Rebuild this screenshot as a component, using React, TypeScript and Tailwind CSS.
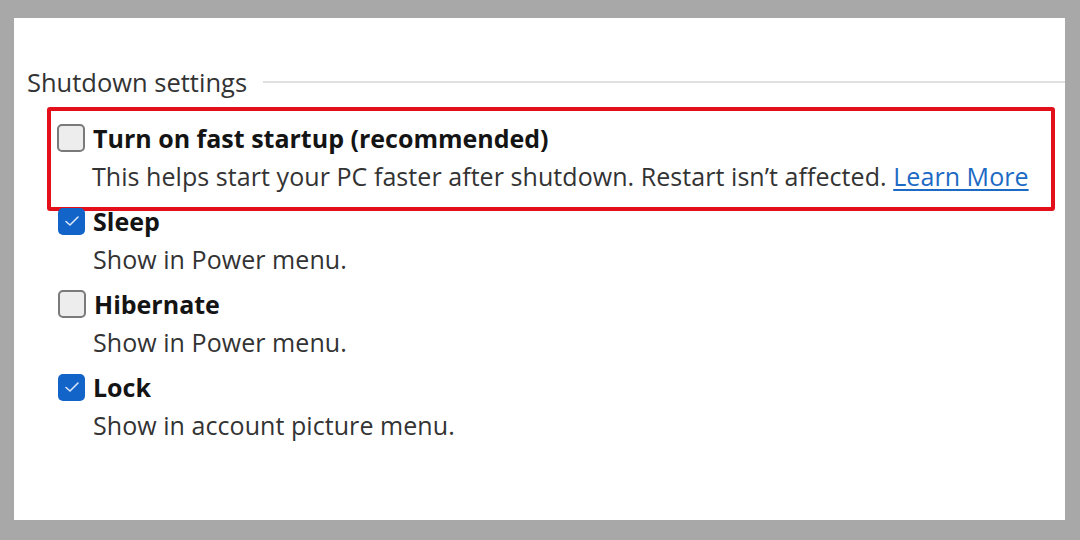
import React from "react";

function Box({ checked }: { checked: boolean }) {
  if (checked) {
    return (
      <div className="w-[27px] h-[27px] rounded-[5px] bg-[#1264c8] flex items-center justify-center shrink-0">
        <svg width="16" height="12" viewBox="0 0 16 12" fill="none">
          <path d="M2 6.5 L6 10 L14 2" stroke="#dbe8f8" strokeWidth="1.6" strokeLinecap="round" strokeLinejoin="round" />
        </svg>
      </div>
    );
  }
  return <div className="w-[28px] h-[28px] rounded-[5px] border-2 border-[#7a7a7a] bg-[#ededed] shrink-0" />;
}

function Item({ checked, title, children }: { checked: boolean; title: string; children: React.ReactNode }) {
  return (
    <div className="flex flex-col">
      <div className="flex items-center h-[32px]">
        <Box checked={checked} />
        <span className="ml-[8px] text-[25px] font-bold text-[#141414] leading-[32px]">{title}</span>
      </div>
      <div className="pl-[35px] mt-[6px] text-[25px] tracking-[0.06px] text-[#333] leading-[32px]">{children}</div>
    </div>
  );
}

export default function App() {
  return (
    <div
      className="w-[1080px] h-[540px] bg-[#a8a8a8] pt-[18px] pl-[14px] pr-[15px] pb-[20px]"
      style={{ fontFamily: '"Open Sans", "Noto Sans", sans-serif' }}
    >
      <div className="bg-white h-full flex flex-col pt-[48px]">
        <div className="flex items-center pl-[13px]">
          <span className="text-[25.5px] leading-[32px] text-[#333]">Shutdown settings</span>
          <div className="flex-1 h-[2px] bg-[#e0e0e0] ml-[16px]" />
        </div>
        <div className="ml-[33px] mr-[10px] mt-[9px] border-[4px] border-[#e3101b] rounded-[3px] pl-[6px] pt-[11px] pb-[15px]">
          <Item checked={false} title="Turn on fast startup (recommended)">
            This helps start your PC faster after shutdown. Restart isn’t affected.{" "}
            <span className="text-[#1d6ac4] underline underline-offset-[3px]">Learn More</span>
          </Item>
        </div>
        <div className="ml-[44px] flex flex-col gap-[13px] -mt-[6px]">
          <Item checked={true} title="Sleep">Show in Power menu.</Item>
          <Item checked={false} title="Hibernate">Show in Power menu.</Item>
          <Item checked={true} title="Lock">Show in account picture menu.</Item>
        </div>
      </div>
    </div>
  );
}
